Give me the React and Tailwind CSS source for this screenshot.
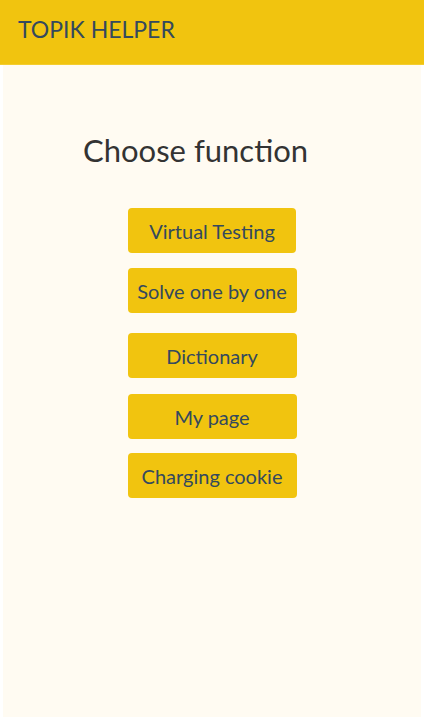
import React from 'react';

export default function App() {
    return (
        <div className="w-[424px] h-[720px] flex flex-col bg-white font-['Lato',sans-serif]">
            <header className="h-[65px] shrink-0 flex items-center px-[18px] pb-[5px] bg-[#f1c40f] border-b border-[#f4cd2e]">
                <h1 className="text-[23px] text-[#34495e]">TOPIK HELPER</h1>
            </header>
            <main className="flex-1 mx-[3px] mb-[3px] bg-[#fffbf2]">
                <h2 className="mt-[65px] pl-[80px] text-[31px] leading-[40px] text-[#333333]">Choose function</h2>
                <div className="flex flex-col items-center mt-[38px]">
                    <button className="w-[168px] h-[45px] rounded-[4px] bg-[#f1c40f] text-[20px] text-[#34495e]">Virtual Testing</button>
                    <button className="mt-[15px] w-[169px] h-[45px] rounded-[4px] bg-[#f1c40f] text-[20px] text-[#34495e]">Solve one by one</button>
                    <button className="mt-[20px] w-[169px] h-[45px] rounded-[4px] bg-[#f1c40f] text-[20px] text-[#34495e]">Dictionary</button>
                    <button className="mt-[16px] w-[169px] h-[45px] rounded-[4px] bg-[#f1c40f] text-[20px] text-[#34495e]">My page</button>
                    <button className="mt-[14px] w-[169px] h-[45px] rounded-[4px] bg-[#f1c40f] text-[20px] text-[#34495e]">Charging cookie</button>
                </div>
            </main>
        </div>
    );
}
